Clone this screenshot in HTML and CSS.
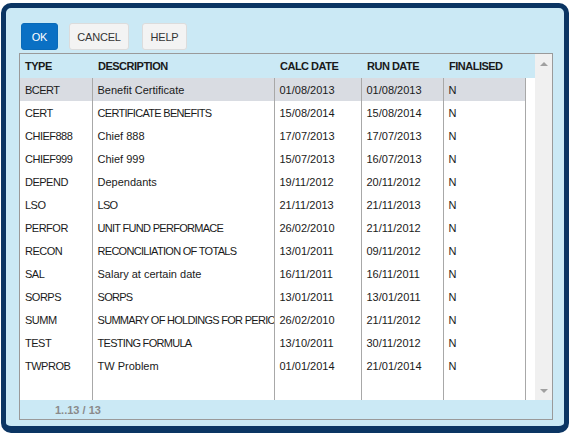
FILE: index.html
```html
<!DOCTYPE html>
<html>
<head>
<meta charset="utf-8">
<link rel="stylesheet" href="styles.css">
</head>
<body>
<div class="dialog">
  <div class="toolbar">
    <button class="btn btn-primary">OK</button>
    <button class="btn btn-cancel">CANCEL</button>
    <button class="btn btn-help">HELP</button>
  </div>
  <div class="grid">
    <div class="grid-main">
      <div class="grid-left">
        <table class="head">
          <colgroup><col class="c1"><col class="c2"><col class="c3"><col class="c4"><col class="c5"></colgroup>
          <tr><th>TYPE</th><th>DESCRIPTION</th><th>CALC DATE</th><th>RUN DATE</th><th>FINALISED</th></tr>
        </table>
        <div class="body">
          <table class="rows">
            <colgroup><col class="c1"><col class="c2"><col class="c3"><col class="c4"><col class="c5"></colgroup>
            <tr class="sel"><td>BCERT</td><td>Benefit Certificate</td><td>01/08/2013</td><td>01/08/2013</td><td>N</td></tr>
            <tr><td>CERT</td><td class="u">CERTIFICATE BENEFITS</td><td>15/08/2014</td><td>15/08/2014</td><td>N</td></tr>
            <tr><td>CHIEF888</td><td>Chief 888</td><td>17/07/2013</td><td>17/07/2013</td><td>N</td></tr>
            <tr><td>CHIEF999</td><td>Chief 999</td><td>15/07/2013</td><td>16/07/2013</td><td>N</td></tr>
            <tr><td>DEPEND</td><td>Dependants</td><td>19/11/2012</td><td>20/11/2012</td><td>N</td></tr>
            <tr><td>LSO</td><td class="u">LSO</td><td>21/11/2013</td><td>21/11/2013</td><td>N</td></tr>
            <tr><td>PERFOR</td><td class="u">UNIT FUND PERFORMACE</td><td>26/02/2010</td><td>21/11/2012</td><td>N</td></tr>
            <tr><td>RECON</td><td class="u">RECONCILIATION OF TOTALS</td><td>13/01/2011</td><td>09/11/2012</td><td>N</td></tr>
            <tr><td>SAL</td><td>Salary at certain date</td><td>16/11/2011</td><td>16/11/2011</td><td>N</td></tr>
            <tr><td>SORPS</td><td class="u">SORPS</td><td>13/01/2011</td><td>13/01/2011</td><td>N</td></tr>
            <tr><td>SUMM</td><td class="u">SUMMARY OF HOLDINGS FOR PERIOD</td><td>26/02/2010</td><td>21/11/2012</td><td>N</td></tr>
            <tr><td>TEST</td><td class="u">TESTING FORMULA</td><td>13/10/2011</td><td>30/11/2012</td><td>N</td></tr>
            <tr><td>TWPROB</td><td>TW Problem</td><td>01/01/2014</td><td>21/01/2014</td><td>N</td></tr>
            <tr class="filler"><td></td><td></td><td></td><td></td><td></td></tr>
          </table>
        </div>
      </div>
      <div class="scrollbar">
        <span class="arrow up"></span>
        <span class="arrow down"></span>
      </div>
    </div>
    <div class="footer">1..13 / 13</div>
  </div>
</div>
</body>
</html>
```
FILE: styles.css
```css
html, body {
  margin: 0;
  padding: 0;
  background: #ffffff;
}
body {
  font-family: "Liberation Sans", Arial, sans-serif;
  font-size: 11px;
  color: #1a1a1a;
}
.dialog {
  box-sizing: border-box;
  margin: 3px 0 0 1px;
  width: 568px;
  height: 430px;
  border-style: solid;
  border-color: #0b3563;
  border-width: 5px 5px 7px 5px;
  border-radius: 10px;
  background: #cbe9f5;
  padding: 15px 11px 6px 13px;
  display: flex;
  flex-direction: column;
}
.toolbar {
  display: flex;
  gap: 11px;
  padding-left: 2px;
  height: 27px;
  margin-bottom: 3px;
}
.btn {
  font-family: "Liberation Sans", Arial, sans-serif;
  font-size: 11px;
  letter-spacing: -0.2px;
  height: 27px;
  padding: 0;
  border: 1px solid #dcdcdc;
  border-radius: 3px;
  background: #f3f3f3;
  color: #333;
}
.btn-primary {
  background: #0a70c4;
  border-color: #0a6ab8;
  color: #fff;
  width: 37px;
}
.btn-cancel { width: 60px; }
.btn-help { width: 45px; margin-left: 2px; }
.grid {
  box-sizing: border-box;
  height: 367px;
  border: 1px solid #9a9a9a;
  display: flex;
  flex-direction: column;
  background: #fff;
}
.grid-main {
  flex: 1;
  display: flex;
  min-height: 0;
}
.grid-left {
  flex: 1;
  display: flex;
  flex-direction: column;
}
table {
  border-collapse: collapse;
  table-layout: fixed;
  width: 505px;
}
.c1 { width: 72px; }
.c2 { width: 182px; }
.c3 { width: 87px; }
.c4 { width: 82px; }
.c5 { width: 82px; }
.head {
  width: 100%;
  background: #cbe9f5;
}
.head .c5 { width: auto; }
.head th {
  height: 24px;
  padding: 0 0 0 5px;
  text-align: left;
  font-weight: bold;
  letter-spacing: -0.5px;
  color: #1a1a1a;
  white-space: nowrap;
}
.head th + th { padding-left: 6px; }
.body {
  flex: 1;
  display: flex;
}
.rows {
  height: 100%;
}
.rows td {
  height: 23px;
  padding: 0 0 0 5px;
  border-right: 1px solid #a8a8a8;
  white-space: nowrap;
  overflow: hidden;
}
.rows td + td { padding-left: 5px; }
.rows td:first-child { letter-spacing: -0.5px; }
.rows td.u { letter-spacing: -0.7px; }
.rows tr.sel td { background: #d9dce2; }
.rows tr.filler td { height: auto; }
.scrollbar {
  width: 17px;
  background: #f0f0f0;
  display: flex;
  flex-direction: column;
  justify-content: space-between;
  align-items: center;
  padding: 8px 0 7px;
  box-sizing: border-box;
}
.arrow {
  width: 0;
  height: 0;
  border-left: 4px solid transparent;
  border-right: 4px solid transparent;
}
.arrow.up { border-bottom: 4px solid #a0a0a0; }
.arrow.down { border-top: 4px solid #a0a0a0; }
.footer {
  height: 19px;
  background: #cbe9f5;
  color: #8a8a8a;
  font-weight: bold;
  padding-left: 35px;
  line-height: 20px;
}
```
